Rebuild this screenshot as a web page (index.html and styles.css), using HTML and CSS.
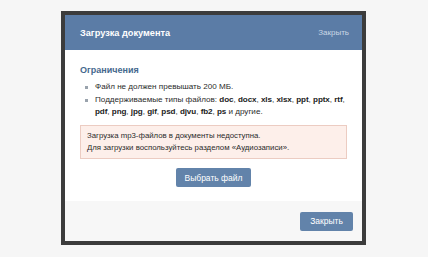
FILE: index.html
```html
<!DOCTYPE html>
<html lang="ru">
<head>
<meta charset="utf-8">
<title>Загрузка документа</title>
<link rel="stylesheet" href="styles.css">
</head>
<body>
<div class="modal">
  <div class="head">
    <div class="title">Загрузка документа</div>
    <div class="close-link">Закрыть</div>
  </div>
  <div class="content">
    <div class="section-title">Ограничения</div>
    <ul class="rules">
      <li>Файл не должен превышать 200 МБ.</li>
      <li>Поддерживаемые типы файлов: <b>doc</b>, <b>docx</b>, <b>xls</b>, <b>xlsx</b>, <b>ppt</b>, <b>pptx</b>, <b>rtf</b>, <b>pdf</b>, <b>png</b>, <b>jpg</b>, <b>gif</b>, <b>psd</b>, <b>djvu</b>, <b>fb2</b>, <b>ps</b> и другие.</li>
    </ul>
    <div class="notice">Загрузка mp3-файлов в документы недоступна.<br>Для загрузки воспользуйтесь разделом «Аудиозаписи».</div>
    <div class="actions">
      <button class="btn btn-choose">Выбрать файл</button>
    </div>
  </div>
  <div class="foot">
    <button class="btn btn-close">Закрыть</button>
  </div>
</div>
</body>
</html>
```

FILE: styles.css
```css
html, body {
  margin: 0;
  padding: 0;
  background: #f6f6f6;
  font-family: "Liberation Sans", Arial, sans-serif;
  font-size: 8.1px;
  color: #2b2b2b;
}
.modal {
  margin: 11px 0 0 61px;
  width: 297px;
  border: 4px solid #3c3c3c;
  background: #fff;
}
.head {
  height: 35px;
  background: #5b7ca6;
  display: flex;
  align-items: center;
  justify-content: space-between;
  padding: 0 13px 0 15px;
}
.title {
  color: #fff;
  font-weight: bold;
  font-size: 9.2px;
}
.close-link {
  color: #c9d6e5;
  font-size: 8px;
}
.content {
  padding: 14px 15px 14px 15px;
}
.section-title {
  color: #45688e;
  font-weight: bold;
  font-size: 9px;
  line-height: 12px;
}
.rules {
  list-style: none;
  margin: 5px 0 0 0;
  padding: 0;
}
.rules li {
  position: relative;
  padding-left: 15px;
  line-height: 11.5px;
  margin-top: 1.5px;
}
.rules li::before {
  content: "";
  position: absolute;
  left: 5px;
  top: 5px;
  width: 3px;
  height: 3px;
  background: #9aa3ad;
}
.rules b {
  color: #222;
  letter-spacing: -0.1px;
}
.notice {
  margin-top: 8px;
  background: #fdefea;
  border: 1px solid #ecccc2;
  padding: 4px 6px;
  line-height: 12px;
  font-size: 7.8px;
}
.actions {
  display: flex;
  justify-content: center;
  margin-top: 9px;
}
.btn {
  border: 0;
  background: #6283aa;
  color: #fff;
  font-family: "Liberation Sans", Arial, sans-serif;
  font-size: 8.5px;
  height: 19px;
  border-radius: 2px;
  padding: 0;
  cursor: pointer;
}
.btn-choose {
  width: 75px;
}
.foot {
  background: #f7f7f7;
  height: 40px;
  display: flex;
  align-items: center;
  justify-content: flex-end;
  padding-right: 9px;
}
.btn-close {
  width: 53px;
}
```
